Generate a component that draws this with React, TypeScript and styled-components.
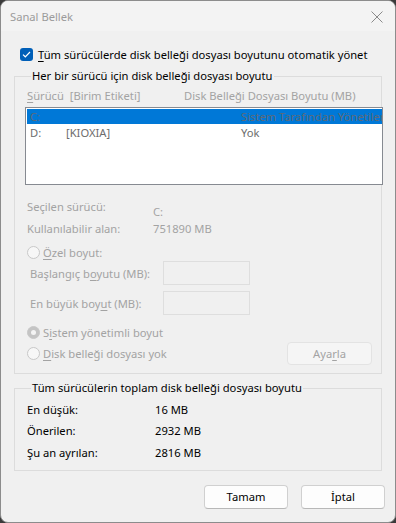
import React from "react";
import styled, { createGlobalStyle } from "styled-components";

const GlobalStyle = createGlobalStyle`
  html, body {
    margin: 0;
    padding: 0;
    background: #3a3a3a;
  }
  * {
    box-sizing: border-box;
  }
`;

const Window = styled.div`
  width: 396px;
  height: 523px;
  border: 1px solid #8c8c8c;
  border-radius: 8px;
  overflow: hidden;
  background: #f0f0f0;
  font-family: "Noto Sans", "Liberation Sans", sans-serif;
  font-size: 11.2px;
  color: #000;
  display: flex;
  flex-direction: column;
`;

const TitleBar = styled.div`
  height: 30px;
  flex: none;
  display: flex;
  align-items: center;
  justify-content: space-between;
  padding: 0 10px 0 9px;
  background: #f3f3f3;
  color: #9b9b9b;
`;

const CloseButton = styled.div`
  width: 16px;
  height: 16px;
  display: flex;
  align-items: center;
  justify-content: center;
  margin-top: 1px;
`;

const Body = styled.div`
  flex: 1;
  display: flex;
  flex-direction: column;
  padding: 15px 13px 0 13px;
`;

const CheckRow = styled.label`
  height: 16px;
  display: flex;
  align-items: center;
  gap: 5px;
  padding-left: 6px;
  white-space: nowrap;
`;

const CheckBox = styled.span`
  width: 13px;
  height: 13px;
  flex: none;
  border-radius: 3px;
  background: #005fb8;
  display: flex;
  align-items: center;
  justify-content: center;
`;

const Group = styled.fieldset<{ $gap?: number; $bottom?: number }>`
  margin: ${(p) => p.$gap ?? 5}px 0 0 0;
  padding: 0 0 ${(p) => p.$bottom ?? 8}px 10px;
  border: 1px solid #dcdcdc;
  min-width: 0;
  width: 368px;
`;

const Legend = styled.legend`
  padding: 0 1px;
  margin-left: 6px;
  line-height: 16px;
  color: #000;
`;

const HeaderRow = styled.div`
  height: 16px;
  margin-top: 3px;
  display: grid;
  grid-template-columns: 157px 1fr;
  align-items: center;
  padding-left: 2px;
  color: #a3a3a3;
`;

const ListBox = styled.div`
  margin-top: 4px;
  margin-right: -2px;
  height: 78px;
  border: 1px solid #868a91;
  background: #fff;
  padding: 1px 0 0 1px;
  overflow: hidden;
`;

const ListRow = styled.div<{ $selected?: boolean }>`
  height: 15px;
  margin-bottom: 1px;
  display: grid;
  grid-template-columns: 36px 175px 1fr;
  align-items: center;
  padding-left: 3px;
  white-space: nowrap;
  overflow: hidden;
  background: ${(p) => (p.$selected ? "#0078d7" : "transparent")};
  color: ${(p) => (p.$selected ? "#5e6a78" : "#6d6d6d")};
`;

const InfoGrid = styled.div`
  margin-top: 13px;
  display: grid;
  grid-template-columns: 126px 1fr;
  grid-auto-rows: 16px;
  row-gap: 6px;
  align-items: center;
  padding-left: 2px;
  color: #a3a3a3;
`;

const InfoValue = styled.span<{ $shift?: number }>`
  padding-top: ${(p) => p.$shift ?? 0}px;
`;

const RadioRow = styled.div<{ $top: number }>`
  margin-top: ${(p) => p.$top}px;
  height: 16px;
  display: flex;
  align-items: center;
  gap: 3px;
  padding-left: 2px;
  color: #a3a3a3;
`;

const Radio = styled.span<{ $checked?: boolean }>`
  width: 13px;
  height: 13px;
  flex: none;
  border-radius: 50%;
  border: 1px solid #c8c8c8;
  background: ${(p) => (p.$checked ? "#c4c4c4" : "#f7f7f7")};
  display: flex;
  align-items: center;
  justify-content: center;
  &::after {
    content: "";
    display: ${(p) => (p.$checked ? "block" : "none")};
    width: 5px;
    height: 5px;
    border-radius: 50%;
    background: #f4f4f4;
  }
`;

const FieldRow = styled.div<{ $top: number }>`
  margin-top: ${(p) => p.$top}px;
  display: grid;
  grid-template-columns: 133px 87px;
  align-items: center;
  padding-left: 5px;
  color: #a3a3a3;
`;

const Input = styled.div`
  height: 24px;
  border: 1px solid #dedede;
  background: #f0f0f0;
`;

const SplitRow = styled.div`
  margin-top: 2px;
  display: flex;
  align-items: center;
  justify-content: space-between;
  padding-right: 9px;
`;

const Button = styled.button<{ $disabled?: boolean }>`
  font: inherit;
  height: ${(p) => (p.$disabled ? 23 : 24)}px;
  width: ${(p) => (p.$disabled ? 85 : 84)}px;
  border-radius: 4px;
  border: 1px solid ${(p) => (p.$disabled ? "#e3e3e3" : "#d0d0d0")};
  border-bottom-color: ${(p) => (p.$disabled ? "#e3e3e3" : "#b8b8b8")};
  background: ${(p) => (p.$disabled ? "#f5f5f5" : "#fdfdfd")};
  color: ${(p) => (p.$disabled ? "#a3a3a3" : "#000")};
  padding: 0;
  line-height: 20px;
`;

const TotalGrid = styled.div`
  margin-top: 5px;
  display: grid;
  grid-template-columns: 128px 1fr;
  grid-auto-rows: 16px;
  row-gap: 5.5px;
  align-items: center;
  padding-left: 2px;
`;

const Footer = styled.div`
  margin-top: 14px;
  display: flex;
  justify-content: flex-end;
  gap: 13px;
  margin-right: -3px;
`;

const U = styled.span`
  text-decoration: underline;
  text-underline-offset: 2px;
`;

const CloseIcon = () => (
  <svg width="12" height="12" viewBox="0 0 12 12">
    <path d="M0.5 0.5 L11.5 11.5 M11.5 0.5 L0.5 11.5" stroke="#8a8a8a" strokeWidth="1" />
  </svg>
);

const CheckIcon = () => (
  <svg width="9" height="7" viewBox="0 0 9 7">
    <path d="M1 3.6 L3.3 5.8 L8 1" stroke="#fff" strokeWidth="1.2" fill="none" />
  </svg>
);

const App = () => {
  return (
    <Window>
      <GlobalStyle />
      <TitleBar>
        <span>Sanal Bellek</span>
        <CloseButton>
          <CloseIcon />
        </CloseButton>
      </TitleBar>
      <Body>
        <CheckRow>
          <CheckBox>
            <CheckIcon />
          </CheckBox>
          <span>
            <U>T</U>üm sürücülerde disk belleği dosyası boyutunu otomatik yönet
          </span>
        </CheckRow>

        <Group $gap={6}>
          <Legend>Her bir sürücü için disk belleği dosyası boyutu</Legend>
          <HeaderRow>
            <span>
              <U>S</U>ürücü&nbsp; [Birim Etiketi]
            </span>
            <span>Disk Belleği Dosyası Boyutu (MB)</span>
          </HeaderRow>
          <ListBox>
            <ListRow $selected>
              <span>C:</span>
              <span></span>
              <span>Sistem Tarafından Yönetilen</span>
            </ListRow>
            <ListRow>
              <span>D:</span>
              <span>[KIOXIA]</span>
              <span>Yok</span>
            </ListRow>
          </ListBox>

          <InfoGrid>
            <span>Seçilen sürücü:</span>
            <InfoValue $shift={10}>C:</InfoValue>
            <span>Kullanılabilir alan:</span>
            <InfoValue>751890 MB</InfoValue>
          </InfoGrid>

          <RadioRow $top={8}>
            <Radio />
            <span>
              <U>Ö</U>zel boyut:
            </span>
          </RadioRow>
          <FieldRow $top={1}>
            <span>
              Başlangıç b<U>o</U>yutu (MB):
            </span>
            <Input />
          </FieldRow>
          <FieldRow $top={6}>
            <span>
              En büyük boy<U>u</U>t (MB):
            </span>
            <Input />
          </FieldRow>

          <RadioRow $top={9}>
            <Radio $checked />
            <span>
              S<U>i</U>stem yönetimli boyut
            </span>
          </RadioRow>
          <SplitRow>
            <RadioRow $top={0}>
              <Radio />
              <span>
                <U>D</U>isk belleği dosyası yok
              </span>
            </RadioRow>
            <Button $disabled>
              Aya<U>r</U>la
            </Button>
          </SplitRow>
        </Group>

        <Group $gap={6} $bottom={10}>
          <Legend>Tüm sürücülerin toplam disk belleği dosyası boyutu</Legend>
          <TotalGrid>
            <span>En düşük:</span>
            <span>16 MB</span>
            <span>Önerilen:</span>
            <span>2932 MB</span>
            <span>Şu an ayrılan:</span>
            <span>2816 MB</span>
          </TotalGrid>
        </Group>

        <Footer>
          <Button>Tamam</Button>
          <Button>İptal</Button>
        </Footer>
      </Body>
    </Window>
  );
};

export default App;
